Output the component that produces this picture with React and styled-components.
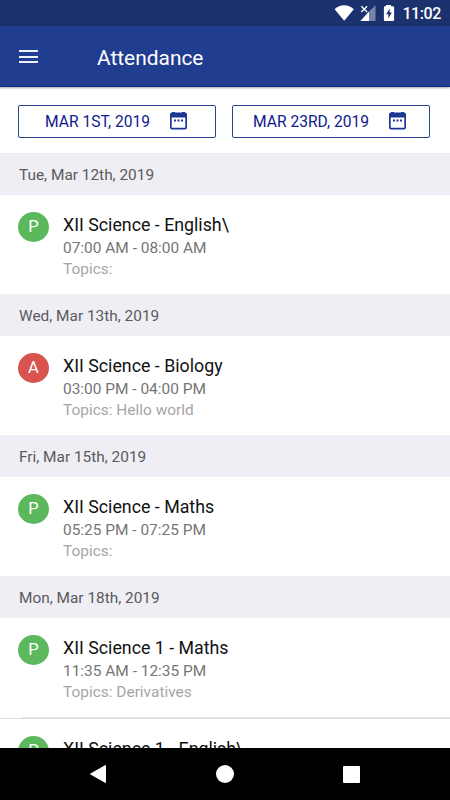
import styled, { createGlobalStyle } from "styled-components";

const GlobalStyle = createGlobalStyle`
  * {
    box-sizing: border-box;
  }
  body {
    margin: 0;
    background: #fff;
    font-family: Roboto, "Liberation Sans", sans-serif;
  }
`;

const Screen = styled.div`
  display: flex;
  flex-direction: column;
  width: 450px;
  height: 800px;
  overflow: hidden;
  background: #fff;
`;

const StatusBar = styled.div`
  display: flex;
  flex: none;
  align-items: center;
  justify-content: flex-end;
  height: 26px;
  padding-right: 9px;
  background: #1b326f;
  color: #fff;

  svg {
    display: block;
  }
`;

const Clock = styled.span`
  width: 39px;
  margin-left: 6.5px;
  padding-top: 2px;
  font-size: 16px;
  font-weight: 500;
  letter-spacing: -0.4px;
  line-height: 24px;
  text-align: right;
  white-space: nowrap;
`;

const AppBar = styled.header`
  display: flex;
  flex: none;
  align-items: center;
  height: 61px;
  padding: 0 19px;
  background: #213d8f;
  border-bottom: 1px solid #06298b;
  box-shadow: 0 1px 2px rgba(0, 0, 0, 0.35);
  color: #fff;
  z-index: 1;
`;

const MenuButton = styled.button`
  display: flex;
  flex-direction: column;
  gap: 3.5px;
  width: 19px;
  margin: 1px 59px 0 0;
  padding: 0;
  border: 0;
  background: none;

  span {
    height: 2px;
    background: #eef0f8;
  }
`;

const Title = styled.h1`
  margin: 4px 0 0;
  font-size: 20.9px;
  font-weight: 400;
  line-height: 28px;
`;

const Content = styled.main`
  flex: 1;
  min-height: 0;
  overflow: hidden;
`;

const Filters = styled.div`
  display: flex;
  justify-content: space-between;
  height: 66px;
  padding: 18px 20px 15px 18px;
`;

const DateButton = styled.button`
  display: flex;
  align-items: center;
  width: 198px;
  padding: 0 0 0 ${(props) => props.$inset}px;
  border: 1px solid #2b4191;
  border-radius: 2px;
  background: #fff;
  color: #10208a;
  font-family: inherit;
  font-size: 15.6px;
  white-space: nowrap;

  span {
    width: ${(props) => props.$labelWidth}px;
    text-align: left;
  }

  svg {
    margin-bottom: 2px;
  }
`;

const DayHeader = styled.h2`
  height: 42px;
  margin: 0;
  padding: 1px 19px 0;
  background: #efeef4;
  color: #5a5a5d;
  font-size: 15.4px;
  font-weight: 400;
  line-height: 42px;
`;

const Lecture = styled.div`
  display: flex;
  height: 99.1px;
  padding: 17px 18px 0;
`;

const Badge = styled.div`
  flex: none;
  width: 31px;
  height: 30px;
  margin-right: 14px;
  border-radius: 50%;
  background: ${(props) => (props.$present ? "#5cb85c" : "#d9534f")};
  color: #fff;
  font-size: 16.5px;
  line-height: 29px;
  text-align: center;
`;

const Subject = styled.div`
  padding: 1px 0;
  color: #111;
  font-size: 17.8px;
  line-height: 24px;
`;

const Time = styled.div`
  color: #757575;
  font-size: 15.45px;
  line-height: 21px;
`;

const Topics = styled.div`
  color: #a6a6a6;
  font-size: 15.45px;
  line-height: 21px;
`;

const Divider = styled.hr`
  height: 2px;
  margin: 0;
  border: 0;
  border-bottom: 1px solid #dedede;
  background: linear-gradient(to right, #fff 22px, #e6e6e6 22px);
`;

const NavBar = styled.nav`
  display: flex;
  flex: none;
  align-items: center;
  justify-content: space-between;
  height: 52px;
  padding: 0 90px;
  background: #000;

  svg {
    display: block;
  }
`;

const days = [
  {
    date: "Tue, Mar 12th, 2019",
    lectures: [{ status: "P", subject: "XII Science - English\\", time: "07:00 AM - 08:00 AM", topics: "" }],
  },
  {
    date: "Wed, Mar 13th, 2019",
    lectures: [{ status: "A", subject: "XII Science - Biology", time: "03:00 PM - 04:00 PM", topics: "Hello world" }],
  },
  {
    date: "Fri, Mar 15th, 2019",
    lectures: [{ status: "P", subject: "XII Science - Maths", time: "05:25 PM - 07:25 PM", topics: "" }],
  },
  {
    date: "Mon, Mar 18th, 2019",
    lectures: [
      { status: "P", subject: "XII Science 1 - Maths", time: "11:35 AM - 12:35 PM", topics: "Derivatives" },
      { status: "P", subject: "XII Science 1 - English\\", time: "", topics: "" },
    ],
  },
];

function StatusIcons() {
  return (
    <svg width="62" height="18" viewBox="0 0 62 18" fill="#fff">
      <path d="M0.6 5.2C6-.1 14.4-.1 19.8 5.2L10.2 16.8Z" />
      <path d="M41.5 1.2V17H35V7.6Z" opacity=".4" />
      <path d="M35 7.6V17H26.3Z" />
      <path d="M27.3 2.2l5.8 5.8M33.1 2.2l-5.8 5.8" stroke="#fff" strokeWidth="1.3" />
      <path
        fillRule="evenodd"
        d="M52 2.2V1h5v1.2h2q1.1 0 1.1 1.1V16q0 1-1.1 1h-8q-1.1 0-1.1-1V3.3q0-1.1 1.1-1.1zM55.7 4.5L52.2 10.3H54.4V14.5L57.8 8.6H55.7z"
      />
    </svg>
  );
}

function CalendarIcon() {
  return (
    <svg width="18" height="18" viewBox="0 0 18 18">
      <path
        fill="#1c378f"
        fillRule="evenodd"
        d="M2 0H5V.6H12V0H15V.6Q17 .6 17 2.6V15.5Q17 17.5 15 17.5H2Q0 17.5 0 15.5V2.6Q0 .6 2 .6zM1.7 5.5V15.7H15.3V5.5z"
      />
      <path fill="#1c378f" d="M4 7.5h2v2h-2zM7.5 7.5h2v2H7.5zM11 7.5h2v2h-2z" />
    </svg>
  );
}

function LectureItem({ lecture }) {
  return (
    <Lecture>
      <Badge $present={lecture.status === "P"}>{lecture.status}</Badge>
      <div>
        <Subject>{lecture.subject}</Subject>
        {lecture.time && (
          <>
            <Time>{lecture.time}</Time>
            <Topics>Topics: {lecture.topics}</Topics>
          </>
        )}
      </div>
    </Lecture>
  );
}

function App() {
  return (
    <Screen>
      <GlobalStyle />
      <StatusBar>
        <StatusIcons />
        <Clock>11:02</Clock>
      </StatusBar>
      <AppBar>
        <MenuButton aria-label="Menu">
          <span />
          <span />
          <span />
        </MenuButton>
        <Title>Attendance</Title>
      </AppBar>
      <Content>
        <Filters>
          <DateButton $inset={26} $labelWidth={125}>
            <span>MAR 1ST, 2019</span>
            <CalendarIcon />
          </DateButton>
          <DateButton $inset={20} $labelWidth={136}>
            <span>MAR 23RD, 2019</span>
            <CalendarIcon />
          </DateButton>
        </Filters>
        {days.map((day) => (
          <section key={day.date}>
            <DayHeader>{day.date}</DayHeader>
            {day.lectures.map((lecture, i) => (
              <div key={lecture.subject}>
                {i > 0 && <Divider />}
                <LectureItem lecture={lecture} />
              </div>
            ))}
          </section>
        ))}
      </Content>
      <NavBar>
        <svg width="16" height="18" viewBox="0 0 16 18" fill="#fff">
          <path d="M15.5 0.5V17.5L0.5 9Z" stroke="#fff" strokeWidth="1" strokeLinejoin="round" />
        </svg>
        <svg width="18" height="18" viewBox="0 0 18 18" fill="#fff">
          <circle cx="9" cy="9" r="9" />
        </svg>
        <svg width="17" height="17" viewBox="0 0 17 17" fill="#fff">
          <rect width="17" height="17" rx="1" />
        </svg>
      </NavBar>
    </Screen>
  );
}

export default App;
